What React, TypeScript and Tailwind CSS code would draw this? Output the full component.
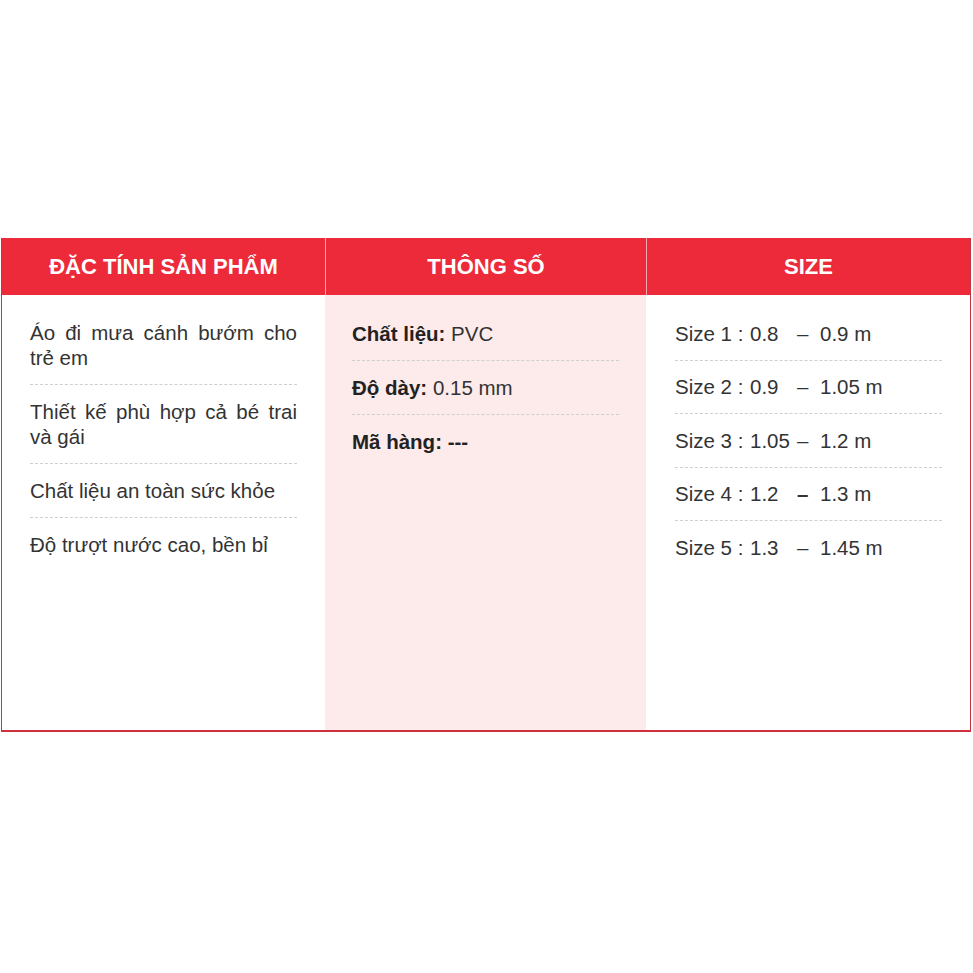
const features = [
  "Áo đi mưa cánh bướm cho trẻ em",
  "Thiết kế phù hợp cả bé trai và gái",
  "Chất liệu an toàn sức khỏe",
  "Độ trượt nước cao, bền bỉ",
];

const specs = [
  { label: "Chất liệu:", value: "PVC" },
  { label: "Độ dày:", value: "0.15 mm" },
  { label: "Mã hàng:", value: "---", boldValue: true },
];

const sizes = [
  { name: "Size 1", from: "0.8", to: "0.9 m" },
  { name: "Size 2", from: "0.9", to: "1.05 m" },
  { name: "Size 3", from: "1.05", to: "1.2 m" },
  { name: "Size 4", from: "1.2", to: "1.3 m", boldDash: true },
  { name: "Size 5", from: "1.3", to: "1.45 m" },
];

function HeaderCell({ title, divider }: { title: string; divider?: boolean }) {
  return (
    <div
      className={`flex items-center justify-center bg-[#ed2a3a] text-[22px] font-bold text-white ${
        divider ? "border-l border-[#f5aab1]" : ""
      }`}
    >
      {title}
    </div>
  );
}

export default function App() {
  return (
    <div
      className="h-[973px] w-[973px] bg-white text-[20.5px] leading-[25px] text-[#333]"
      style={{ fontFamily: '"Liberation Sans", Arial, sans-serif' }}
    >
      <div className="ml-[1px] pt-[238px]">
        <div className="w-[970px] border-b-2 border-l border-r border-[#c8323f] border-b-[#d0303c]">
          {/* Header */}
          <div className="grid h-[57px] grid-cols-[323px_321px_1fr]">
            <HeaderCell title="ĐẶC TÍNH SẢN PHẨM" />
            <HeaderCell title="THÔNG SỐ" divider />
            <HeaderCell title="SIZE" divider />
          </div>

          {/* Body */}
          <div className="grid h-[435px] grid-cols-[323px_321px_1fr]">
            <div className="bg-white pl-[28px] pr-[28px] pt-[11px]">
              {features.map((f, i) => (
                <div
                  key={f}
                  className={`py-[14px] text-justify ${
                    i < features.length - 1 ? "border-b border-dashed border-[#cfcfcf]" : ""
                  }`}
                >
                  {f}
                </div>
              ))}
            </div>

            <div className="bg-[#fdebeb] pl-[27px] pr-[27px] pt-[12px]">
              {specs.map((s, i) => (
                <div
                  key={s.label}
                  className={`py-[14px] ${
                    i < specs.length - 1 ? "border-b border-dashed border-[#cfcfcf]" : ""
                  }`}
                >
                  <span className="font-bold text-[#222]">{s.label}</span>{" "}
                  <span className={s.boldValue ? "font-bold text-[#222]" : ""}>{s.value}</span>
                </div>
              ))}
            </div>

            <div className="bg-white pl-[29px] pr-[28px] pt-[12px]">
              {sizes.map((s, i) => (
                <div
                  key={s.name}
                  className={`flex whitespace-pre py-[13.75px] ${
                    i < sizes.length - 1 ? "border-b border-dashed border-[#cfcfcf]" : ""
                  }`}
                >
                  <span className="w-[75px]">{s.name} : </span>
                  <span className="w-[47px]">{s.from}</span>
                  <span className={`w-[23px] ${s.boldDash ? "font-bold" : ""}`}>–</span>
                  <span>{s.to}</span>
                </div>
              ))}
            </div>
          </div>
        </div>
      </div>
    </div>
  );
}
